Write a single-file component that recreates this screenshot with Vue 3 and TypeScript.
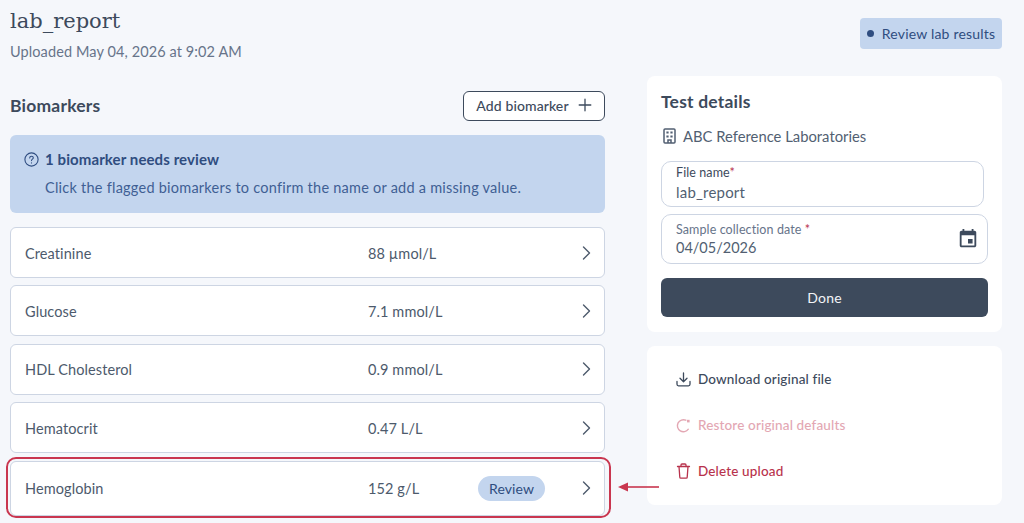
<template>
  <div class="page">
    <section class="left">
      <h1 class="title">lab_report</h1>
      <p class="uploaded">Uploaded May 04, 2026 at 9:02 AM</p>

      <div class="section-head">
        <h2 class="section-title">Biomarkers</h2>
        <button class="add-btn" type="button">
          Add biomarker
          <svg width="14" height="14" viewBox="0 0 14 14" fill="none" stroke="currentColor" stroke-width="1.3" stroke-linecap="round">
            <path d="M7 1.2v11.6M1.2 7h11.6" />
          </svg>
        </button>
      </div>

      <div class="alert">
        <div class="alert-head">
          <svg width="15" height="15" viewBox="0 0 15 15" fill="none" stroke="currentColor" stroke-width="1.1" stroke-linecap="round">
            <circle cx="7.5" cy="7.5" r="6.6" />
            <path d="M5.7 5.9c0-1 .8-1.7 1.8-1.7s1.8.7 1.8 1.6c0 1.3-1.8 1.4-1.8 2.8" />
            <path d="M7.5 10.8v.1" />
          </svg>
          <strong>1 biomarker needs review</strong>
        </div>
        <p class="alert-text">Click the flagged biomarkers to confirm the name or add a missing value.</p>
      </div>

      <ul class="rows">
        <li
          v-for="row in rows"
          :key="row.name"
          class="row"
          :class="{ 'row--flagged': row.review }"
        >
          <span class="row-name">{{ row.name }}</span>
          <span class="row-value">{{ row.value }}</span>
          <span v-if="row.review" class="review-tag">Review</span>
          <svg class="chevron" width="9" height="14" viewBox="0 0 9 14" fill="none" stroke="currentColor" stroke-width="1.4" stroke-linecap="round" stroke-linejoin="round">
            <path d="M1.5 1l6 6-6 6" />
          </svg>
          <template v-if="row.review">
            <span class="row-outline"></span>
            <svg class="row-arrow" width="41" height="10" viewBox="0 0 41 10">
              <path d="M9 4.2h32v1.6H9z" fill="#c9364f" />
              <path d="M0 5l10-4.6v9.2z" fill="#c9364f" />
            </svg>
          </template>
        </li>
      </ul>
    </section>

    <aside class="right">
      <div class="status-pill">
        <span class="dot"></span>
        Review lab results
      </div>

      <div class="card details">
        <h2 class="card-title">Test details</h2>
        <div class="lab">
          <svg width="13" height="16" viewBox="0 0 13 16" fill="none" stroke="currentColor" stroke-width="1.5">
            <rect x="1" y="1" width="11" height="14" rx="1" />
            <path d="M5 15v-3h3v3" />
            <path d="M3.4 3.4h2.2v2.2H3.4zM7.4 3.4h2.2v2.2H7.4zM3.4 7.4h2.2v2.2H3.4zM7.4 7.4h2.2v2.2H7.4z" fill="currentColor" stroke="none" />
          </svg>
          ABC Reference Laboratories
        </div>

        <div class="field field--name">
          <label class="field-label field-label--dark">File name<span class="req">*</span></label>
          <div class="field-value">lab_report</div>
        </div>

        <div class="field field--date">
          <div>
            <label class="field-label">Sample collection date <span class="req">*</span></label>
            <div class="field-value">04/05/2026</div>
          </div>
          <svg class="calendar" width="22" height="22" viewBox="0 0 24 24">
            <path fill="currentColor" d="M17 12h-5v5h5v-5zM16 1v2H8V1H6v2H5c-1.110 0-1.990.9-1.990 2L3 19c0 1.100.89 2 2 2h14c1.100 0 2-.9 2-2V5c0-1.100-.9-2-2-2h-1V1h-2zm3 18H5V8h14v11z" />
          </svg>
        </div>

        <button class="done" type="button">Done</button>
      </div>

      <div class="card actions">
        <div class="action">
          <svg width="15" height="15" viewBox="0 0 15 15" fill="none" stroke="currentColor" stroke-width="1.3" stroke-linecap="round" stroke-linejoin="round">
            <path d="M7.5 1v8.5M4 6.3l3.5 3.4L11 6.3" />
            <path d="M1 9.5v2.8c0 .9.7 1.500 1.500 1.500h10c.8 0 1.500-.6 1.500-1.500V9.500" />
          </svg>
          Download original file
        </div>
        <div class="action action--muted">
          <svg width="15" height="15" viewBox="0 0 15 15" fill="none" stroke="currentColor" stroke-width="1.4" stroke-linecap="round">
            <path d="M12.3 11.2A6 6 0 1 1 9.8 2.2" />
            <path d="M11 1.800h2.600v2.600H11z" fill="currentColor" stroke="none" />
          </svg>
          Restore original defaults
        </div>
        <div class="action action--danger">
          <svg width="15" height="16" viewBox="0 0 15 16" fill="none" stroke="currentColor" stroke-width="1.3" stroke-linecap="round" stroke-linejoin="round">
            <path d="M1.5 3.500h12M3 3.500l.8 10.700c0 .6.500 1 1 1h5.400c.5 0 1-.4 1-1l.8-10.700" />
            <path d="M5 3.500V2c0-.6.400-1 1-1h3c.6 0 1 .4 1 1v1.500" />
          </svg>
          Delete upload
        </div>
      </div>
    </aside>
  </div>
</template>

<script setup lang="ts">
interface Biomarker {
  name: string
  value: string
  review?: boolean
}

const rows: Biomarker[] = [
  { name: 'Creatinine', value: '88 µmol/L' },
  { name: 'Glucose', value: '7.1 mmol/L' },
  { name: 'HDL Cholesterol', value: '0.9 mmol/L' },
  { name: 'Hematocrit', value: '0.47 L/L' },
  { name: 'Hemoglobin', value: '152 g/L', review: true }
]
</script>

<style>
html,
body {
  margin: 0;
  background: #f5f7fb;
}
</style>

<style scoped>
.page {
  display: flex;
  justify-content: space-between;
  width: 1024px;
  height: 523px;
  overflow: hidden;
  box-sizing: border-box;
  padding: 0 22px 0 10px;
  background: #f5f7fb;
  color: #3d4a5c;
  font-family: Lato, "Noto Sans", sans-serif;
  font-size: 15px;
}

.left {
  width: 595px;
}

.right {
  width: 355px;
  display: flex;
  flex-direction: column;
  align-items: flex-end;
}

.title {
  margin: 7px 0 0;
  font-family: "DejaVu Serif", serif;
  font-size: 21px;
  line-height: 29px;
  font-weight: 400;
}

.uploaded {
  margin: 6px 0 0;
  font-size: 14.5px;
  line-height: 20px;
  color: #67748a;
  letter-spacing: 0.1px;
}

.section-head {
  display: flex;
  justify-content: space-between;
  align-items: center;
  margin-top: 29px;
}

.section-title {
  margin: -2px 0 0;
  font-size: 17.5px;
  font-weight: 700;
  letter-spacing: 0.2px;
}

.add-btn {
  display: flex;
  align-items: center;
  justify-content: center;
  gap: 9px;
  width: 142px;
  height: 30px;
  padding: 0 0 2px;
  background: #fff;
  border: 1px solid #3d4a5c;
  border-radius: 6px;
  color: #3d4a5c;
  font: inherit;
  font-size: 14px;
  font-weight: 500;
  letter-spacing: 0.1px;
}

.alert {
  box-sizing: border-box;
  height: 78px;
  margin-top: 14px;
  padding: 14px 14px 0;
  background: #c3d5ee;
  border-radius: 6px;
  color: #2f4d80;
}

.alert-head {
  display: flex;
  align-items: center;
  gap: 6px;
  font-size: 15px;
  line-height: 20px;
  letter-spacing: 0.1px;
}

.alert-text {
  margin: 9px 0 0 21px;
  font-size: 14.5px;
  line-height: 19px;
  color: #3f5f94;
  letter-spacing: 0.24px;
}

.rows {
  list-style: none;
  margin: 14px 0 0;
  padding: 0;
  display: flex;
  flex-direction: column;
  gap: 7.4px;
}

.row {
  position: relative;
  display: flex;
  align-items: center;
  box-sizing: border-box;
  height: 51px;
  padding: 1px 14px 0;
  background: #fff;
  border: 1px solid #cdd5e3;
  border-radius: 6px;
  color: #4d5a6c;
  font-size: 14.5px;
  letter-spacing: 0.1px;
}

.row--flagged {
  height: 55px;
  padding-top: 0;
}

.row-name {
  width: 343px;
}

.row-value {
  width: 110px;
}

.review-tag {
  box-sizing: border-box;
  width: 67px;
  height: 25px;
  line-height: 25px;
  text-align: center;
  border-radius: 13px;
  background: #c3d5ee;
  color: #2f4d80;
  font-size: 14px;
}

.chevron {
  position: absolute;
  right: 13px;
  top: 50%;
  transform: translateY(-50%);
  color: #4d5a6c;
}

.row-outline {
  position: absolute;
  inset: -5px -7px -3px -5px;
  border: 2.5px solid #c9364f;
  border-radius: 10px;
}

.row-arrow {
  position: absolute;
  left: 607px;
  top: 20px;
}

.status-pill {
  display: flex;
  align-items: center;
  justify-content: center;
  gap: 8px;
  box-sizing: border-box;
  width: 142px;
  height: 31px;
  margin-top: 18px;
  background: #c3d5ee;
  border-radius: 4px;
  color: #2f4d80;
  font-size: 14px;
  letter-spacing: 0.2px;
}

.dot {
  width: 7px;
  height: 7px;
  border-radius: 50%;
  background: #2f4d80;
}

.card {
  box-sizing: border-box;
  width: 355px;
  background: #fff;
  border-radius: 8px;
}

.details {
  height: 256px;
  margin-top: 27px;
  padding: 15px 14px 0;
}

.card-title {
  margin: 0;
  font-size: 17.5px;
  line-height: 22px;
  font-weight: 700;
  letter-spacing: 0.2px;
}

.lab {
  display: flex;
  align-items: center;
  gap: 7px;
  margin-top: 13px;
  padding-left: 2px;
  line-height: 20px;
  color: #525f72;
  font-size: 14.8px;
}

.field {
  box-sizing: border-box;
  background: #fff;
  border: 1px solid #cdd5e3;
  border-radius: 10px;
  padding-left: 14px;
}

.field--name {
  width: 323px;
  height: 46px;
  margin-top: 15px;
  padding-top: 3px;
}

.field--date {
  display: flex;
  justify-content: space-between;
  align-items: center;
  width: 327px;
  height: 50px;
  margin-top: 7px;
  padding-right: 8px;
}

.field-label {
  display: block;
  font-size: 12.5px;
  line-height: 16px;
  color: #67748a;
  letter-spacing: 0.1px;
}

.field-label--dark {
  color: #3d4a5c;
}

.req {
  color: #b8324c;
}

.field-value {
  font-size: 15px;
  line-height: 19px;
  margin-top: 2px;
  color: #525f72;
  letter-spacing: 0.2px;
}

.field--date .field-value {
  margin-top: 0;
  font-size: 14.5px;
  letter-spacing: 0;
}

.calendar {
  color: #3d4a5c;
}

.done {
  display: block;
  width: 327px;
  height: 39px;
  margin-top: 14px;
  padding: 0;
  border: 0;
  border-radius: 6px;
  background: #3d4a5c;
  color: #f2f4f7;
  font: inherit;
  font-size: 14px;
  letter-spacing: 0.2px;
}

.actions {
  height: 159px;
  margin-top: 14px;
  padding: 10px 29px 0;
  display: flex;
  flex-direction: column;
}

.action {
  display: flex;
  align-items: center;
  gap: 7px;
  height: 46px;
  font-size: 13.5px;
  font-weight: 500;
  letter-spacing: 0.15px;
  color: #3d4a5c;
}

.action--muted {
  color: #e3a7b3;
}

.action--danger {
  color: #b8324c;
}
</style>
